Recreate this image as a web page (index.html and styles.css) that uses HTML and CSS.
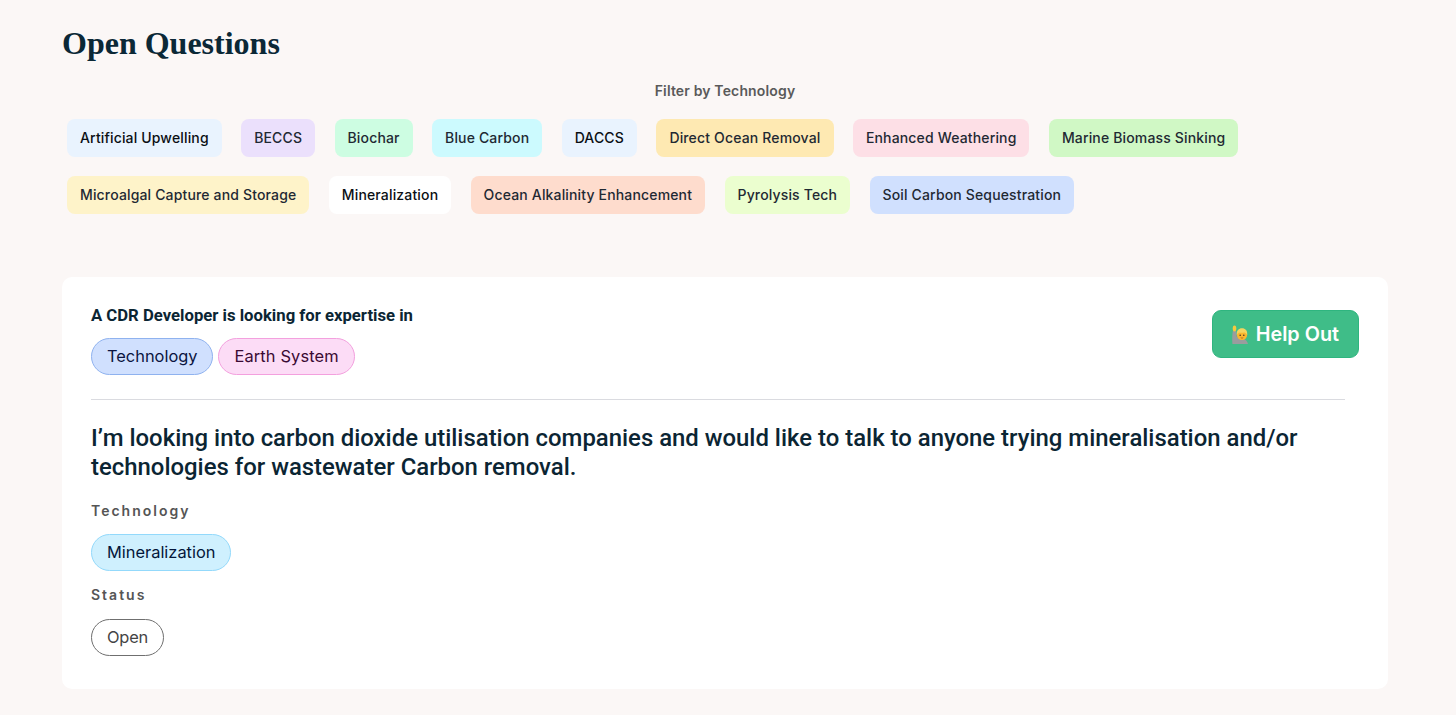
FILE: index.html
```html
<!DOCTYPE html>
<html lang="en">
<head>
  <meta charset="UTF-8">
  <meta name="viewport" content="width=device-width, initial-scale=1.0">
  <title>Open Questions</title>
  <link rel="stylesheet" href="styles.css">
</head>
<body>
  <h1>Open Questions</h1>

  <p class="filter-label">Filter by Technology</p>
  <div class="filters">
    <span class="chip chip-upwelling">Artificial Upwelling</span>
    <span class="chip chip-beccs">BECCS</span>
    <span class="chip chip-biochar">Biochar</span>
    <span class="chip chip-blue">Blue Carbon</span>
    <span class="chip chip-daccs">DACCS</span>
    <span class="chip chip-ocean">Direct Ocean Removal</span>
    <span class="chip chip-weathering">Enhanced Weathering</span>
    <span class="chip chip-biomass">Marine Biomass Sinking</span>
    <span class="chip chip-microalgal">Microalgal Capture and Storage</span>
    <span class="chip chip-mineral">Mineralization</span>
    <span class="chip chip-alkalinity">Ocean Alkalinity Enhancement</span>
    <span class="chip chip-pyrolysis">Pyrolysis Tech</span>
    <span class="chip chip-soil">Soil Carbon Sequestration</span>
  </div>

  <div class="card">
    <div class="card-head">
      <div>
        <h3>A CDR Developer is looking for expertise in</h3>
        <div class="pills">
          <span class="pill pill-tech">Technology</span>
          <span class="pill pill-earth">Earth System</span>
        </div>
      </div>
      <a class="help-btn" href="#">
        <svg class="help-icon" viewBox="0 0 16 19" width="16" height="19" aria-hidden="true">
          <path d="M.4 19C0 14 .2 10 .8 6h3.400l.6 6c4 .6 10.200 1.500 11.200 7z" fill="#9a9c9e"/>
          <ellipse cx="2.500" cy="3.500" rx="1.800" ry="3" fill="#f6c83f"/>
          <circle cx="10" cy="9.800" r="5.200" fill="#fbb62e"/>
          <path d="M4.800 9.800C4.300 5.500 6.800 3.200 10 3.200s5.700 2.300 5.200 6.600c-.8-1.500-1.800-2.200-3-2.400-2.100.6-4.100.5-5.200.2-.8.500-1.600 1.300-2.200 2.200z" fill="#f5d55f"/>
          <circle cx="8.200" cy="10.200" r=".8" fill="#4a3320"/>
          <circle cx="11.800" cy="10.200" r=".8" fill="#4a3320"/>
          <path d="M8.800 12.700c.8.500 1.600.500 2.400 0" stroke="#a5561f" stroke-width=".8" fill="none"/>
        </svg>
        Help Out
      </a>
    </div>
    <hr class="divider">
    <h2 class="question">I’m looking into carbon dioxide utilisation companies and would like to talk to anyone trying mineralisation and/or technologies for wastewater Carbon removal.</h2>
    <p class="meta-label">Technology</p>
    <span class="pill pill-mineral">Mineralization</span>
    <p class="meta-label meta-status">Status</p>
    <span class="pill pill-open">Open</span>
  </div>
</body>
</html>
```

FILE: styles.css
```css
* {
  box-sizing: border-box;
}

body {
  margin: 0;
  padding: 24px 68px 0 62px;
  background-color: #fbf7f6;
  font-family: Inter, Arial, sans-serif;
  color: #04202e;
}

h1 {
  margin: 0;
  font-family: "Liberation Serif", serif;
  font-size: 32px;
  line-height: 38px;
  font-weight: 700;
  color: #0b2836;
}

.filter-label {
  margin: 19px 0 0;
  text-align: center;
  font-size: 14px;
  line-height: 20px;
  font-weight: 600;
  letter-spacing: .15px;
  color: #5a5a5a;
}

.filters {
  display: flex;
  flex-wrap: wrap;
  gap: 19px 19.4px;
  margin-top: 18px;
  padding-left: 5px;
}

.chip {
  height: 38px;
  padding: 0 13px;
  border-radius: 8px;
  font-size: 14px;
  line-height: 38px;
  font-weight: 500;
  letter-spacing: .155px;
  color: #1f2933;
}

.chip-upwelling { background-color: #e9f3fe; color: #0b0f14; }
.chip-beccs { background-color: #ebe0fc; }
.chip-biochar { background-color: #cdfde2; }
.chip-blue { background-color: #ccfafe; }
.chip-daccs { background-color: #e9f3fe; color: #0b0f14; }
.chip-ocean { background-color: #fee9b2; }
.chip-weathering { background-color: #fddfe6; }
.chip-biomass { background-color: #d0f8c5; }
.chip-microalgal { background-color: #fef3c9; }
.chip-mineral { background-color: #ffffff; color: #0b0f14; }
.chip-alkalinity { background-color: #fedccd; }
.chip-pyrolysis { background-color: #ebfecf; }
.chip-soil { background-color: #d0e0fe; }

.card {
  width: 1326px;
  height: 412px;
  margin-top: 63px;
  padding: 29px 29px 0;
  border-radius: 10px;
  background-color: #fff;
}

.card-head {
  display: flex;
  justify-content: space-between;
  align-items: flex-start;
}

.card-head h3 {
  margin: 0;
  font-family: Roboto, Arial, sans-serif;
  font-size: 16.7px;
  line-height: 20px;
  font-weight: 700;
  color: #0b2533;
}

.pills {
  display: flex;
  gap: 5px;
  margin-top: 12px;
}

.pill {
  display: inline-block;
  height: 37px;
  padding: 0 15px;
  border: 1px solid;
  border-radius: 18.5px;
  font-size: 16.4px;
  line-height: 35px;
}

.pill-tech {
  background-color: #d0e0fe;
  border-color: #8fb2ef;
  color: #0a1440;
}

.pill-earth {
  background-color: #fcdcf6;
  border-color: #f3a0de;
  color: #3a0a33;
  letter-spacing: .13px;
}

.pill-mineral {
  background-color: #cff0fe;
  border-color: #93d9fb;
  color: #03163a;
}

.pill-open {
  background-color: #fff;
  border-color: #6f6f6f;
  color: #444;
  letter-spacing: -.2px;
}

.help-btn {
  display: flex;
  align-items: center;
  gap: 8px;
  height: 48px;
  margin-top: 4px;
  padding: 0 19px;
  border: 1px solid #2fb57f;
  border-radius: 9px;
  background-color: #3fbd88;
  color: #fff;
  font-size: 19.8px;
  font-weight: 600;
  text-decoration: none;
}

.help-icon {
  flex-shrink: 0;
}

.divider {
  width: 1254px;
  margin: 24px 0 0;
  border: 0;
  border-top: 1px solid #dadbe0;
}

.question {
  margin: 24px 0 0;
  font-family: Roboto, Arial, sans-serif;
  font-size: 23.92px;
  line-height: 29px;
  font-weight: 500;
  color: #0b2533;
}

.meta-label {
  margin: 20px 0 14px;
  font-size: 14px;
  line-height: 18px;
  font-weight: 600;
  letter-spacing: 2px;
  color: #555;
}

.meta-status {
  margin: 15px 0 15px;
}
```
